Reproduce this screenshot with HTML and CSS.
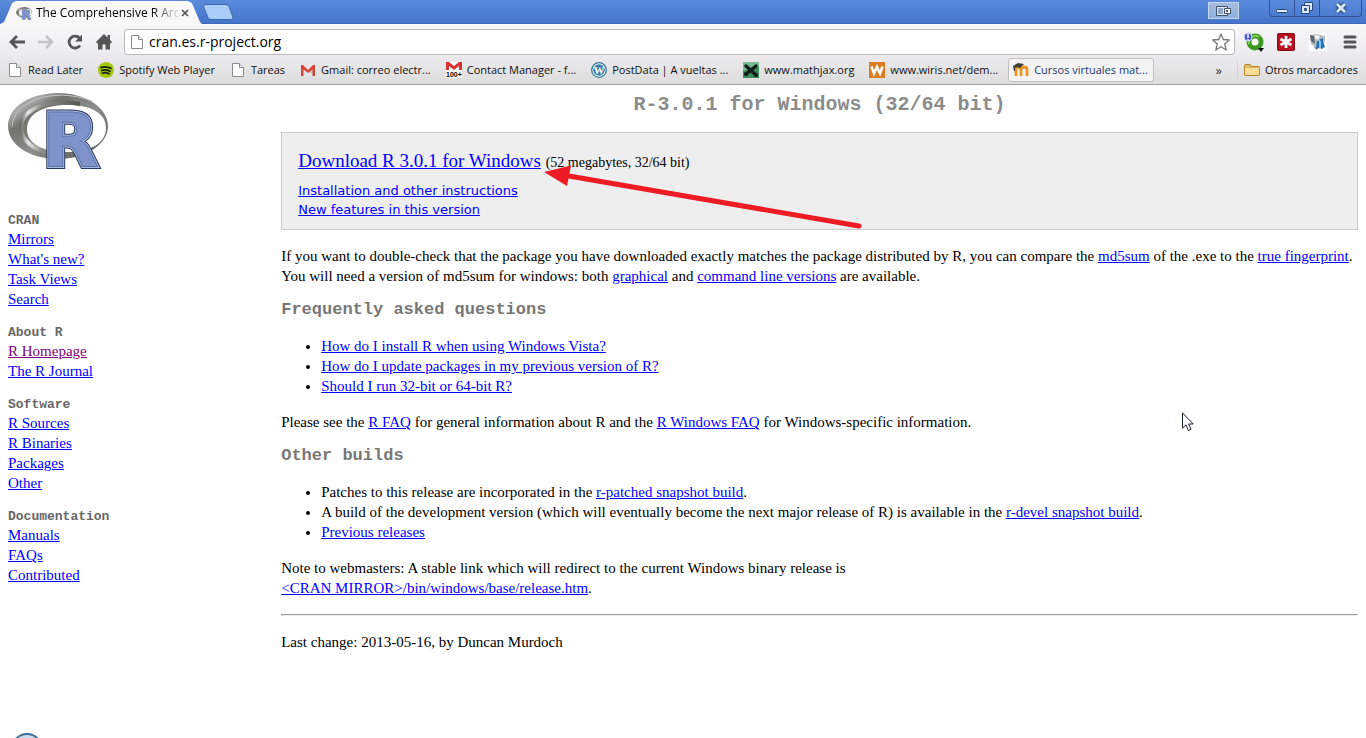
FILE: index.html
```html
<!DOCTYPE html>
<html lang="en">
<head>
<meta charset="utf-8">
<title>The Comprehensive R Archive Network</title>
<link rel="stylesheet" href="styles.css">
</head>
<body>
<svg class="defs" aria-hidden="true">
  <defs>
    <linearGradient id="ring" x1="0" y1="0" x2="1" y2="1">
      <stop offset="0" stop-color="#8b8e87"/><stop offset=".18" stop-color="#a9aca6"/><stop offset=".3" stop-color="#6f736c"/><stop offset=".55" stop-color="#8d908a"/><stop offset="1" stop-color="#4d504a"/>
    </linearGradient>
    <linearGradient id="ringInner" x1="0" y1="0" x2="1" y2="0">
      <stop offset="0" stop-color="#6e726b"/><stop offset=".12" stop-color="#e6e8e4"/><stop offset=".35" stop-color="#8b8e88"/><stop offset="1" stop-color="#565953"/>
    </linearGradient>
    <symbol id="rlogo" viewBox="0 0 100 76">
      <path fill="url(#ring)" fill-rule="evenodd" d="M50 0C78 0 100 15 100 33S78 66 50 66 0 52 0 33 22 0 50 0ZM59 12C35 12 19 21 19 36S35 59 59 59 98 50 98 35 83 12 59 12Z"/>
      <path fill="none" stroke="url(#ringInner)" stroke-width="4" d="M72 11C38 5 13 17 13 35c0 12 12 22 32 26"/>
      <path fill="none" stroke="#c2c5bf" stroke-width="1" d="M84 8C44-7 5 9 4 34"/>
      <g font-family="DejaVu Sans" font-weight="700" font-size="74" stroke-linejoin="miter">
        <text x="34" y="74" fill="#28375e" stroke="#28375e" stroke-width="5">R</text>
        <text x="34" y="74" fill="#b4c2e5" stroke="#a8b8df" stroke-width="3">R</text>
        <text x="34" y="74" fill="#7d93c9" stroke="#5b73ab" stroke-width="1">R</text>
      </g>
    </symbol>
    <symbol id="page" viewBox="0 0 16 16">
      <path fill="#fff" stroke="#8b8b8b" d="M2.500 1.500h7l4 4v9h-11z"/><path fill="#eee" stroke="#8b8b8b" d="M9.500 1.500v4h4"/>
    </symbol>
  </defs>
</svg>

<header class="browser">
  <div class="titlebar">
    <div class="tab">
      <svg class="favicon"><use href="#rlogo"/></svg>
      <span class="tab-title">The Comprehensive R Arc</span>
      <button class="tab-close" aria-label="Close tab"><svg width="8" height="8" viewBox="0 0 8 8"><path stroke="#555" stroke-width="1.700" d="m1 1 6 6M7 1 1 7"/></svg></button>
    </div>
    <button class="new-tab" aria-label="New tab"><svg width="32" height="16" viewBox="0 0 32 16"><path fill="#a9cdf6" stroke="#3c66ad" d="M4 .5h20q2 0 3 2l4 11q.5 2-2 2H9q-2 0-3-2L1.500 3Q1 .5 4 .5z"/></svg></button>
    <button class="user-button" aria-label="Switch view"><svg width="18" height="12" viewBox="0 0 18 12"><path fill="#dce7f5" stroke="#3e526e" d="M1.500 1.500h11v9h-11z"/><path fill="#8fa6c4" d="M3 3h5v6H3z"/><path fill="#fff" stroke="#3e526e" d="M9.500 3.500h6v5h-6z"/><path fill="#3e526e" d="M11 5h2v2h-2z"/></svg></button>
    <div class="window-buttons">
      <button aria-label="Minimise"><svg width="14" height="12" viewBox="0 0 14 12"><rect x="1.500" y="7.500" width="11" height="3" rx="1" fill="#dbe7fa" stroke="#294876"/></svg></button>
      <button aria-label="Restore"><svg width="14" height="14" viewBox="0 0 14 14"><path fill="#dbe7fa" stroke="#294876" d="M4.500 1.500h8v8h-8z"/><path fill="#dbe7fa" stroke="#294876" d="M1.500 4.500h8v8h-8z"/><path fill="#5587d6" stroke="#294876" d="M4.500 7.500h2v2h-2z"/></svg></button>
      <button class="wide" aria-label="Close"><svg width="14" height="12" viewBox="0 0 14 12"><path stroke="#294876" stroke-width="5" d="m3 2 8 8M11 2l-8 8"/><path stroke="#dbe7fa" stroke-width="2.800" d="m3 2 8 8M11 2l-8 8"/></svg></button>
    </div>
  </div>

  <div class="toolbar">
    <button aria-label="Back"><svg width="18" height="16" viewBox="0 0 18 16"><path fill="none" stroke="#555" stroke-width="2.800" d="M17 8H3M9 2 3 8l6 6"/></svg></button>
    <button aria-label="Forward"><svg width="18" height="16" viewBox="0 0 18 16"><path fill="none" stroke="#c4c4c4" stroke-width="2.600" d="M1 8h14M9 2l6 6-6 6"/></svg></button>
    <button aria-label="Reload"><svg width="18" height="16" viewBox="0 0 18 16"><path fill="none" stroke="#555" stroke-width="2.800" d="M14 11.500A6 6 0 1 1 13.500 4"/><path fill="#555" d="M16 .5v7H9z"/></svg></button>
    <button aria-label="Home"><svg width="18" height="16" viewBox="0 0 18 16"><path fill="#555" d="M9 0 1 8l1 1.500 1-.5v6.500h4.500v-5h3v5H15V9l1 .5L17 8l-2-2V1h-2.500v2.500z"/></svg></button>
    <label class="address"><svg width="16" height="16"><use href="#page"/></svg>
      <input type="text" value="cran.es.r-project.org" aria-label="Address">
      <svg width="18" height="18" viewBox="0 0 18 18"><path fill="#fff" stroke="#777" stroke-width="1.300" stroke-linejoin="round" d="m9 1 2.300 5.500 6 .5-4.600 3.900L14.200 17 9 13.700 3.800 17l1.500-6.100L.7 7l6-.5z"/></svg>
    </label>
    <button class="ext" aria-label="Evernote notifier"><svg width="22" height="20" viewBox="0 0 22 20"><circle cx="12" cy="10" r="6" fill="#fff" stroke="#3c9a22" stroke-width="5"/><path fill="none" stroke="#83d452" stroke-width="2" d="M6 12a6.500 6.500 0 0 1 10-7"/><circle cx="5" cy="5" r="4" fill="#4b58c8" stroke="#d7dbff"/><path stroke="#fff" stroke-width="1.500" d="M5 2v4M5 7v1.500"/><path fill="#111" d="M15 16h6l-3 4z"/></svg></button>
    <button class="ext" aria-label="Password manager"><svg width="18" height="18" viewBox="0 0 18 18"><rect width="18" height="18" rx="2" fill="#b80f22"/><rect x=".5" y=".5" width="17" height="17" rx="2" fill="none" stroke="#880817"/><path stroke="#fff" stroke-width="2.800" d="M9 3v12M3.500 6l11 6M14.500 6l-11 6"/></svg></button>
    <button class="ext" aria-label="Recycle extension"><svg width="18" height="18" viewBox="0 0 18 18"><path fill="#fff" d="M0 0h18v18H0z"/><path fill="#b9bdc0" d="m1 2 6-1 9 2v4l-2 9-7-1-5-4z"/><path fill="#5c646c" d="m1 2 4 1 1 8-4-3zM5 14l4 1-1 2z"/><path fill="#eff3f5" d="m6 2 5 1-2 4-3-2z"/><path fill="#2374bd" d="M8 8h3l-1 7H7zM11 6l3-1v4l2 5-4 2z"/><path fill="#8fc3e7" d="M10 8h2v6h-2z"/></svg></button>
    <button class="menu" aria-label="Menu"><svg width="14" height="14" viewBox="0 0 14 14"><path stroke="#555" stroke-width="3" stroke-linecap="round" d="M2 2h10M2 7h10M2 12h10"/></svg></button>
  </div>

  <nav class="bookmarks" aria-label="Bookmarks">
    <a href="#"><svg><use href="#page"/></svg>Read Later</a>
    <a href="#"><svg viewBox="0 0 16 16"><circle cx="8" cy="8" r="8" fill="#a1c60b"/><path fill="none" stroke="#17200a" stroke-width="1.800" stroke-linecap="round" d="M3 5.500q5-1.700 10 .8M3.800 8.400q4.200-1.300 8.200.8M4.500 11q3.500-1 6.500.7"/></svg>Spotify Web Player</a>
    <a href="#"><svg><use href="#page"/></svg>Tareas</a>
    <a href="#"><svg viewBox="0 0 16 16"><path fill="#e5e5e5" d="M1 3h14v11H1z"/><path fill="#c9c5c0" d="m8 9 6-5v9z"/><path fill="#d94436" d="M1 3h2l5 5 5-5h2v11h-2.500V7.500L8 11 3.500 7.500V14H1z"/></svg>Gmail: correo electr...</a>
    <a href="#"><svg viewBox="0 0 16 16"><path fill="#fff" d="M0 0h16v16H0z"/><path fill="#d93433" d="M0 0h3l5 4 5-4h3v8h-3V4L8 8 3 4v4H0z"/><text x="0" y="15" font-family="Liberation Sans" font-size="7" font-weight="700">100+</text></svg>Contact Manager - f...</a>
    <a href="#"><svg viewBox="0 0 16 16"><circle cx="8" cy="8" r="7.300" fill="#fff" stroke="#2f759b" stroke-width="1.300"/><circle cx="8" cy="8" r="5.800" fill="#3a7fa5"/><text x="8" y="12" text-anchor="middle" font-family="Liberation Serif" font-size="11" font-weight="700" fill="#fff">W</text></svg>PostData | A vueltas ...</a>
    <a href="#"><svg viewBox="0 0 16 16"><path fill="#388d58" d="M0 0h16v16H0z"/><path fill="#76bc8e" d="M0 0h16v5L0 9z"/><path stroke="#151b18" stroke-width="3.500" stroke-linecap="round" d="m3 4 10 9M13 4 3 12"/><circle cx="3" cy="12" r="2" fill="#151b18"/><circle cx="13" cy="13" r="2" fill="#151b18"/></svg>www.mathjax.org</a>
    <a href="#"><svg viewBox="0 0 16 16"><path fill="#dc7d24" d="M0 0h16v16H0z"/><path fill="none" stroke="#fff" stroke-width="2.500" d="m2.500 4.500 2.500 7L8 5l3 6.500 2.500-7"/></svg>www.wiris.net/dem...</a>
    <a class="active" href="#"><svg viewBox="0 0 16 16"><path fill="none" stroke="#e8941d" stroke-width="2.800" d="M3 14V7q0-2 2.500-2T8 8v6M8 14V8q0-3 3-3t3 3v6"/><path fill="#433f3b" d="m0 4 5-3 6 1-4 4-3-1-2 1v3H1z"/></svg>Cursos virtuales mat...</a>
    <button class="more" aria-label="More bookmarks">»</button>
    <a class="other" href="#"><svg viewBox="0 0 16 16"><path fill="#e6bd67" stroke="#b38329" d="M.5 13V3.500q0-1 1-1H6l1 2h8q.5 0 .5 1V13q0 .5-1 .5h-13q-1 0-1-.5z"/><path fill="#fbdd98" d="M1 6h14v7H1z"/></svg>Otros marcadores</a>
  </nav>
</header>

<div class="frames">
  <aside class="sidebar">
    <svg class="logo" viewBox="0 0 100 76" role="img" aria-label="R logo"><use href="#rlogo"/></svg>
    <nav>
      <h2>CRAN</h2>
      <ul><li><a href="#">Mirrors</a></li><li><a href="#">What's new?</a></li><li><a href="#">Task Views</a></li><li><a href="#">Search</a></li></ul>
      <h2>About R</h2>
      <ul><li><a class="visited" href="#">R Homepage</a></li><li><a href="#">The R Journal</a></li></ul>
      <h2>Software</h2>
      <ul><li><a href="#">R Sources</a></li><li><a href="#">R Binaries</a></li><li><a href="#">Packages</a></li><li><a href="#">Other</a></li></ul>
      <h2>Documentation</h2>
      <ul><li><a href="#">Manuals</a></li><li><a href="#">FAQs</a></li><li><a href="#">Contributed</a></li></ul>
    </nav>
    <span class="badge"></span>
  </aside>

  <main class="content">
    <h1>R-3.0.1 for Windows (32/64 bit)</h1>
    <section class="download">
      <p class="primary"><a href="#">Download R 3.0.1 for Windows</a> <span>(52 megabytes, 32/64 bit)</span></p>
      <p class="secondary"><a href="#">Installation and other instructions</a><br><a href="#">New features in this version</a></p>
      <svg class="arrow" width="320" height="66" viewBox="0 0 320 66"><path stroke="#ed1c24" stroke-width="5" stroke-linecap="round" d="M22 11.500 315 62"/><path fill="#ed1c24" d="M0 8 27 1.500 23 22z"/></svg>
    </section>
    <p>If you want to double-check that the package you have downloaded exactly matches the package distributed by R, you can compare the <a href="#">md5sum</a> of the .exe to the <a href="#">true fingerprint</a>. You will need a version of md5sum for windows: both <a href="#">graphical</a> and <a href="#">command line versions</a> are available.</p>
    <h3>Frequently asked questions</h3>
    <ul>
      <li><a href="#">How do I install R when using Windows Vista?</a></li>
      <li><a href="#">How do I update packages in my previous version of R?</a></li>
      <li><a href="#">Should I run 32-bit or 64-bit R?</a></li>
    </ul>
    <p>Please see the <a href="#">R FAQ</a> for general information about R and the <a href="#">R Windows FAQ</a> for Windows-specific information.</p>
    <h3>Other builds</h3>
    <ul>
      <li>Patches to this release are incorporated in the <a href="#">r-patched snapshot build</a>.</li>
      <li>A build of the development version (which will eventually become the next major release of R) is available in the <a href="#">r-devel snapshot build</a>.</li>
      <li><a href="#">Previous releases</a></li>
    </ul>
    <p>Note to webmasters: A stable link which will redirect to the current Windows binary release is<br><a href="#">&lt;CRAN MIRROR&gt;/bin/windows/base/release.htm</a>.</p>
    <hr>
    <p>Last change: 2013-05-16, by Duncan Murdoch</p>
  </main>
</div>
<svg class="cursor" width="12" height="20" viewBox="0 0 12 20"><path fill="#fff" stroke="#1b1e30" d="M.5.800v15.400l3.500-3.400 2.400 5.700 2.600-1.200-2.400-5.300h4.600z"/></svg>
</body>
</html>
```
FILE: styles.css
```css
* { box-sizing: border-box; }
body {
  margin: 0;
  min-height: 100vh;
  display: flex;
  flex-direction: column;
  overflow: hidden;
  background: #fff;
  color: #000;
  font: 15px/20px "Liberation Serif", serif;
}
.defs { position: absolute; width: 0; height: 0; }
button { border: 0; padding: 0; background: none; display: flex; align-items: center; justify-content: center; }
svg { flex: none; display: block; }

.browser { font: 12px/16px "Open Sans", sans-serif; border-bottom: 1px solid #a0a0a0; }
.titlebar { display: flex; height: 24px; background: linear-gradient(#5a8bdc, #4475cb); border-bottom: 1px solid #3e69b4; }
.tab {
  display: flex;
  align-items: center;
  width: 202px;
  height: 24px;
  padding: 2px 13px 0 16px;
  background: #f8f8f9;
  clip-path: polygon(0 100%, 2% 92%, 6% 12%, 8% 4%, 93% 4%, 95% 12%, 99% 92%, 100% 100%);
}
.favicon { width: 16px; height: 16px; margin-right: 4px; }
.tab-title {
  flex: 1;
  white-space: nowrap;
  -webkit-mask-image: linear-gradient(90deg, #000 80%, transparent);
  mask-image: linear-gradient(90deg, #000 80%, transparent);
}
.new-tab { align-self: center; }
.user-button {
  margin-left: auto;
  align-self: flex-start;
  width: 31px;
  height: 17px;
  margin-top: 2px;
  border: 1px solid #c6d8f2;
  background: linear-gradient(#a6bcdc, #8eafdc);
}
.window-buttons {
  display: flex;
  height: 17px;
  margin: 0 4px 0 30px;
  border: 1px solid #30538f;
  border-top: 0;
  border-radius: 0 0 4px 4px;
}
.window-buttons button { width: 25px; border-right: 1px solid #30538f; }
.window-buttons .wide { width: 41px; border: 0; }

.toolbar { display: flex; align-items: center; height: 34px; padding: 2px 9px 0 8px; background: linear-gradient(#f8f8f9, #ebe9ec); }
.toolbar > button { width: 29px; padding-right: 11px; }
.address {
  flex: 1;
  display: flex;
  align-items: center;
  gap: 4px;
  height: 26px;
  padding: 0 4px;
  border: 1px solid #b9b9b9;
  border-radius: 3px;
  background: #fff;
}
.address input { flex: 1; min-width: 0; border: 0; padding: 0; background: none; font: 14px/20px "Open Sans", sans-serif; }
.toolbar .ext { width: 32px; padding: 0 0 0 6px; }
.toolbar .menu { width: 26px; padding: 0 0 0 12px; }

.bookmarks { display: flex; align-items: center; height: 26px; padding: 0 8px 2px 7px; gap: 15px; font-size: 11px; background: linear-gradient(#ebe9ec, #dddddd); white-space: nowrap; }
.bookmarks a { display: flex; align-items: center; gap: 5px; color: #111; text-decoration: none; }
.bookmarks a svg { width: 16px; height: 16px; }
.bookmarks .active { margin: 0 -5px; padding: 3px 5px 3px 4px; border: 1px solid #c0c0c0; border-radius: 3px; background: #f3f3f4; color: #213a70; }
.more { margin-left: auto; font: 13px/16px "Open Sans", sans-serif; color: #333; }
.bookmarks .other { border-left: 1px solid #cfd3da; padding-left: 6px; }

.frames { display: grid; grid-template-columns: 1fr 4fr; flex: 1; }
.sidebar, .content { padding: 8px; }
a { color: #00f; }
.visited { color: #800080; }

.logo { width: 100px; height: 76px; margin-bottom: 44px; }
.sidebar h2 { margin: 0; font: 700 13px/16px "Liberation Mono", monospace; color: #666; }
.sidebar ul { margin: 0 0 16px; padding: 0; list-style: none; }
.badge { position: fixed; left: 11px; bottom: -27px; width: 32px; height: 32px; border: 2px solid #3a6c96; border-radius: 50%; background: #cbdcec; }

h1 { margin: 0 0 16px; font: 700 20px/23px "Liberation Mono", monospace; color: #8c8c8c; text-align: center; }
.content p { margin: 0 0 14px; }
.download { position: relative; margin-bottom: 16px; padding: 16px 16px 10px; border: 1px solid #ccc; background: #eee; }
.download .primary { margin: 0 0 8px; font-size: 19px; line-height: 24px; }
.primary span { font-size: 14px; line-height: 1; }
.download .secondary { margin: 0; font: 13px/19px "DejaVu Sans", sans-serif; }
.arrow { position: absolute; left: 262px; top: 31px; }
h3 { margin: 0 0 16px; font: 700 17px/20px "Liberation Mono", monospace; color: #777; }
.content ul { margin: 0 0 16px; padding-left: 40px; }
hr { margin: 16px 0; border: 1px solid; border-color: #9a9a9a #eee #eee #9a9a9a; }
.cursor { position: absolute; left: 1182px; top: 412px; }
```
